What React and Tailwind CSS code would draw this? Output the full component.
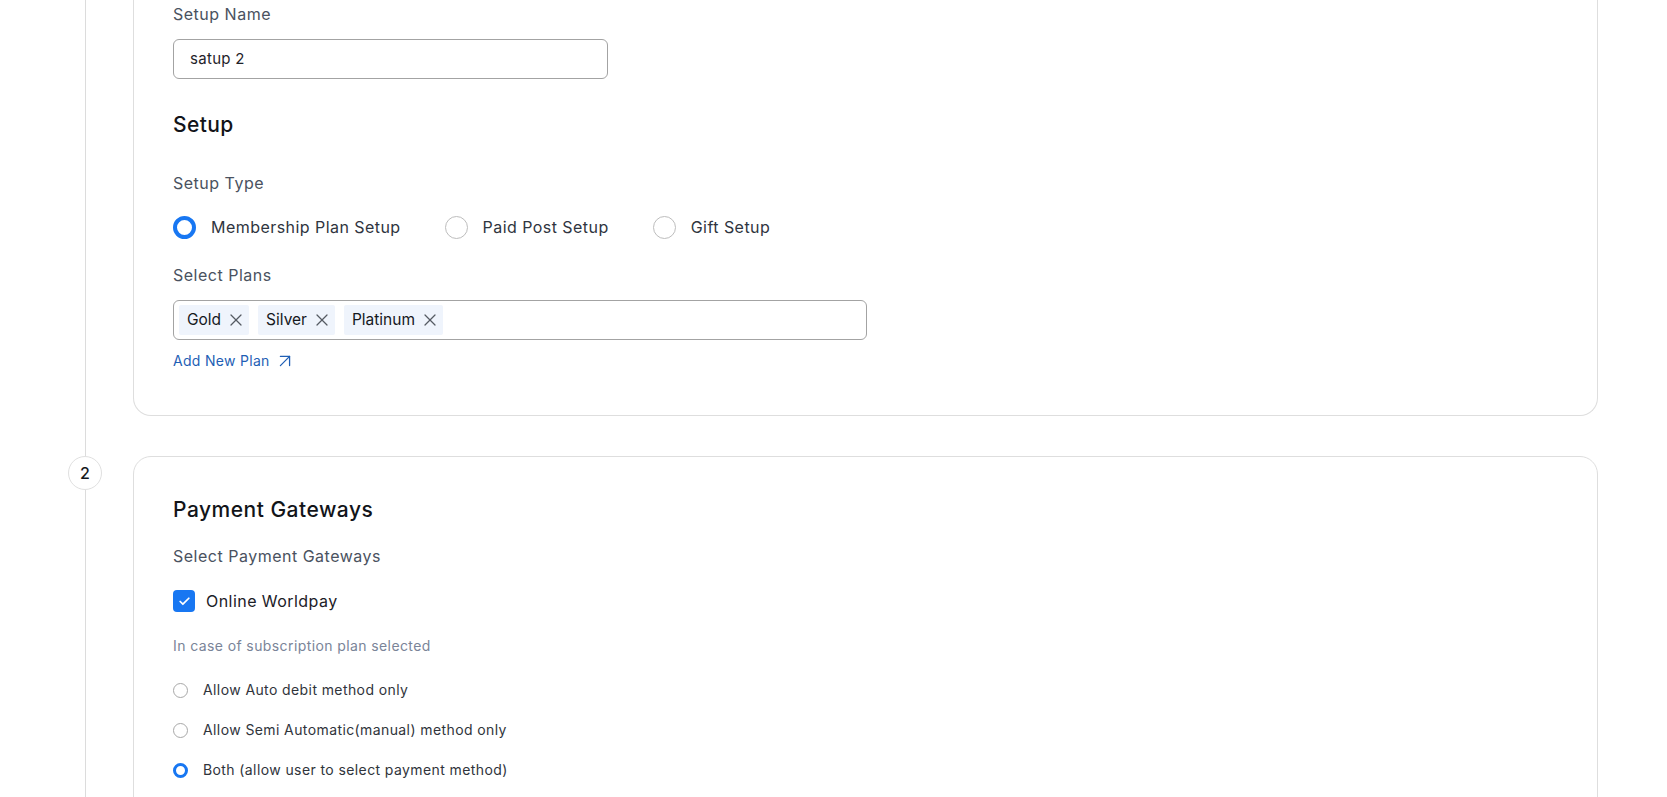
import { X, ArrowUpRight, Check } from 'lucide-react';

const blue = 'border-[#1877f2]';

function BigRadio({ label, checked }) {
  return (
    <label className="flex items-center gap-[15px]">
      <span
        className={
          checked
            ? `w-[23px] h-[23px] rounded-full border-[4px] ${blue} bg-white`
            : 'w-[23px] h-[23px] rounded-full border border-[#bdbdbd] bg-white'
        }
      />
      <span className="text-[16px] leading-6 tracking-[0.45px] text-[#2f3540]">{label}</span>
    </label>
  );
}

function SmallRadio({ label, checked }) {
  return (
    <label className="flex items-center gap-[15px] h-5">
      <span
        className={
          checked
            ? `w-[15px] h-[15px] rounded-full border-[3px] ${blue} bg-white`
            : 'w-[15px] h-[15px] rounded-full border border-[#a8a8a8] bg-white'
        }
      />
      <span className="text-[14px] leading-5 tracking-[0.4px] text-[#30343b]">{label}</span>
    </label>
  );
}

function Tag({ name }) {
  return (
    <span className="flex items-center h-[30px] pl-2 pr-[3px] gap-[5px] bg-[#eff4fc] rounded-[2px]">
      <span className="text-[15.5px] leading-6 text-[#15181d]">{name}</span>
      <X size={20} strokeWidth={1.5} className="text-[#555b63]" />
    </span>
  );
}

export default function App() {
  return (
    <div className="h-screen overflow-hidden bg-white font-['Inter',sans-serif] pl-[68px] pr-[69px]">
      {/* step 1 (scrolled, top cut off) */}
      <div className="flex gap-[31px]">
        <div className="w-[34px] flex justify-center">
          <div className="w-px bg-[#dcdcdc]" />
        </div>
        <div className="flex-1 pb-10">
          <div className="border border-t-0 border-[#dedede] rounded-b-[18px] px-[39px] pt-[2px] pb-[44px]">
            <div className="text-[16px] leading-6 tracking-[0.5px] text-[#4a5260]">Setup Name</div>
            <div className="mt-[13px] w-[435px] h-10 border border-[#a3a3a3] rounded-md flex items-center px-4">
              <span className="text-[15px] tracking-[0.3px] text-[#1f232a]">satup 2</span>
            </div>

            <h2 className="mt-8 text-[21px] leading-7 font-medium tracking-[0.4px] text-[#121419]">Setup</h2>

            <div className="mt-8 text-[16px] leading-6 tracking-[0.5px] text-[#4a5260]">Setup Type</div>
            <div className="mt-5 flex items-center gap-[44px]">
              <BigRadio label="Membership Plan Setup" checked />
              <BigRadio label="Paid Post Setup" />
              <BigRadio label="Gift Setup" />
            </div>

            <div className="mt-6 text-[16px] leading-6 tracking-[0.5px] text-[#4a5260]">Select Plans</div>
            <div className="mt-[13px] w-[694px] h-10 border border-[#a3a3a3] rounded-md flex items-center gap-[9px] px-[5px]">
              <Tag name="Gold" />
              <Tag name="Silver" />
              <Tag name="Platinum" />
            </div>

            <a className="mt-[11px] h-5 flex items-center gap-[4px] text-[14px] leading-5 tracking-[0.3px] text-[#1f5fb5]">
              Add New Plan
              <ArrowUpRight size={22} strokeWidth={1.4} />
            </a>
          </div>
        </div>
      </div>

      {/* step 2 */}
      <div className="flex gap-[31px]">
        <div className="w-[34px] flex flex-col items-center">
          <div className="w-[34px] h-[34px] rounded-full border border-[#e0e0e0] bg-white flex items-center justify-center text-[16px] font-medium text-[#15181d]">
            2
          </div>
          <div className="w-px flex-1 bg-[#dcdcdc]" />
        </div>
        <div className="flex-1 border border-[#dedede] rounded-[18px] px-[39px] pt-[39px] pb-16">
          <h2 className="text-[21px] leading-7 font-medium tracking-[0.5px] text-[#121419]">Payment Gateways</h2>

          <div className="mt-5 text-[16px] leading-6 tracking-[0.5px] text-[#4a5260]">Select Payment Gateways</div>

          <label className="mt-[21px] flex items-center gap-[11px]">
            <span className="w-[22px] h-[22px] rounded-[4px] bg-[#1877f2] flex items-center justify-center">
              <Check size={13} strokeWidth={3.2} className="text-white" />
            </span>
            <span className="text-[16px] leading-6 tracking-[0.45px] text-[#1c2027]">Online Worldpay</span>
          </label>

          <div className="mt-[23px] text-[14px] leading-5 tracking-[0.4px] text-[#7a8498]">
            In case of subscription plan selected
          </div>

          <div className="mt-6 flex flex-col gap-5">
            <SmallRadio label="Allow Auto debit method only" />
            <SmallRadio label="Allow Semi Automatic(manual) method only" />
            <SmallRadio label="Both (allow user to select payment method)" checked />
          </div>
        </div>
      </div>
    </div>
  );
}
